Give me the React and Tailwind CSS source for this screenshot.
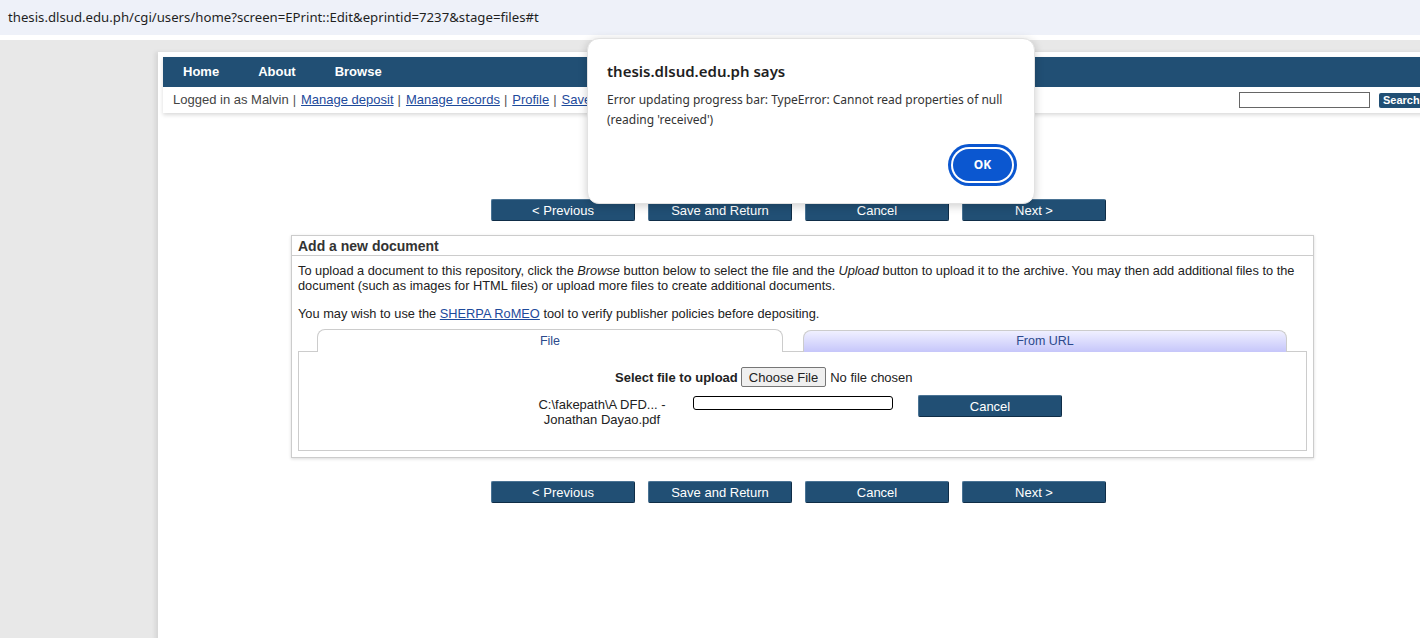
import React from 'react';

const NavButton = ({ children, className = '' }) => (
    <button
        className={`w-[144px] h-[22px] bg-[#214f74] text-white text-[13px] leading-none rounded-[2px] border border-[#0f2d47] border-t-[#4a7394] border-l-[#4a7394] ${className}`}
    >
        {children}
    </button>
);

const Sep = () => <span className="ml-[4px] mr-[5px] text-[#555]">|</span>;

const App = () => {
    return (
        <div className="relative w-[1420px] h-[638px] overflow-hidden bg-[#e8e8e8] font-['Liberation_Sans',Arial,sans-serif]">
            {/* Browser address bar */}
            <div className="h-[35px] bg-[#eef1f9] flex items-center pl-[8px] text-[13.2px] text-[#1f1f1f] font-['Noto_Sans',sans-serif]">
                thesis.dlsud.edu.ph/cgi/users/home?screen=EPrint::Edit&amp;eprintid=7237&amp;stage=files#t
            </div>
            <div className="h-[5px] bg-white"></div>

            {/* Page */}
            <div className="mt-[12px] ml-[158px] w-[1275px] h-[600px] bg-white pt-[5px] pl-[5px] shadow-[-3px_0_4px_rgba(0,0,0,0.08)]">
                {/* Header */}
                <div className="shadow-[0_2px_4px_rgba(0,0,0,0.15)]">
                    <div className="h-[30px] bg-[#214f74] flex items-center pl-[20px] gap-[39px] text-white font-bold text-[13px]">
                        <span>Home</span>
                        <span>About</span>
                        <span>Browse</span>
                    </div>
                    <div className="h-[26px] bg-white flex items-center justify-between pl-[10px] text-[13px] text-[#444]">
                        <div className="flex items-center">
                            <span>Logged in as Malvin</span>
                            <Sep />
                            <a className="text-[#1d4a9b] underline">Manage deposit</a>
                            <Sep />
                            <a className="text-[#1d4a9b] underline">Manage records</a>
                            <Sep />
                            <a className="text-[#1d4a9b] underline">Profile</a>
                            <Sep />
                            <a className="text-[#1d4a9b] underline">Saved searches</a>
                            <Sep />
                            <a className="text-[#1d4a9b] underline">Review</a>
                            <Sep />
                            <a className="text-[#1d4a9b] underline">Logout</a>
                        </div>
                        <div className="flex items-center gap-[9px] pr-[4px]">
                            <div className="w-[131px] h-[16px] border border-[#666] bg-white"></div>
                            <button className="h-[15px] px-[4px] w-[50px] bg-[#214f74] text-white font-bold text-[11px] leading-none rounded-[2px] text-left">
                                Search
                            </button>
                        </div>
                    </div>
                </div>

                {/* Content */}
                <div className="ml-[128px] w-[1023px]">
                    <div className="mt-[86px] pl-[200px] flex gap-[13px]">
                        <NavButton>&lt; Previous</NavButton>
                        <NavButton>Save and Return</NavButton>
                        <NavButton>Cancel</NavButton>
                        <NavButton>Next &gt;</NavButton>
                    </div>

                    {/* Add a new document box */}
                    <div className="mt-[14px] h-[223px] border border-[#ccc] shadow-[0_1px_3px_rgba(0,0,0,0.15)] bg-white">
                        <div className="h-[20px] pt-[1px] border-b border-[#ccc] px-[6px] flex items-center font-bold text-[14px] text-[#333]">
                            Add a new document
                        </div>
                        <div className="px-[6px] pt-[7px] text-[12.8px] leading-[15px] text-[#222]">
                            <p>
                                To upload a document to this repository, click the <i>Browse</i> button below to select the file and the <i>Upload</i> button to upload it to the archive. You may then add additional files to the document (such as images for HTML files) or upload more files to create additional documents.
                            </p>
                            <p className="mt-[13px]">
                                You may wish to use the <a className="text-[#1d4a9b] underline">SHERPA RoMEO</a> tool to verify publisher policies before depositing.
                            </p>

                            {/* Tabs */}
                            <div className="mt-[8px] flex items-end relative z-10">
                                <div className="ml-[19px] w-[466px] h-[23px] bg-white border border-[#ccc] border-b-0 rounded-t-[8px] flex items-center justify-center text-[12.5px] text-[#2c4a8c]">
                                    File
                                </div>
                                <div className="ml-[20px] w-[484px] h-[22px] bg-gradient-to-b from-[#f0f0ff] to-[#c6c6fa] border border-[#ccc] border-b-0 rounded-t-[8px] flex items-center justify-center text-[12.5px] text-[#2c4a8c]">
                                    From URL
                                </div>
                            </div>
                            <div className="w-[1009px] h-[100px] border border-[#ccc] -mt-[1px] text-[13px] text-[#222]">
                                <div className="pt-[15px] pl-[316px] flex items-center">
                                    <span className="font-bold mr-[3px]">Select file to upload</span>
                                    <span className="h-[20px] px-[7px] bg-[#efefef] border border-[#767676] rounded-[2px] flex items-center">
                                        Choose File
                                    </span>
                                    <span className="ml-[4px]">No file chosen</span>
                                </div>
                                <div className="mt-[8px] pl-[229px] flex items-start">
                                    <div className="w-[148px] pt-[2px] leading-[15px] text-center">
                                        <div>C:\fakepath\A DFD... -</div>
                                        <div>Jonathan Dayao.pdf</div>
                                    </div>
                                    <div className="ml-[17px] mt-[1px] w-[200px] h-[14px] border border-black rounded-[3px]"></div>
                                    <NavButton className="ml-[25px]">Cancel</NavButton>
                                </div>
                            </div>
                        </div>
                    </div>

                    <div className="mt-[23px] pl-[200px] flex gap-[13px]">
                        <NavButton>&lt; Previous</NavButton>
                        <NavButton>Save and Return</NavButton>
                        <NavButton>Cancel</NavButton>
                        <NavButton>Next &gt;</NavButton>
                    </div>
                </div>
            </div>

            {/* Alert dialog */}
            <div className="absolute left-[587px] top-[38px] w-[448px] h-[166px] bg-white rounded-[12px] border border-[#e2e2e2] shadow-[0_2px_10px_rgba(0,0,0,0.2)] font-['Noto_Sans',sans-serif] text-[#1f1f1f]">
                <div className="pl-[19px] pt-[21px] text-[15px] font-semibold leading-[22px]">
                    thesis.dlsud.edu.ph says
                </div>
                <div className="pl-[19px] pr-[20px] mt-[8px] text-[12px] leading-[20px] text-[#333]">
                    Error updating progress bar: TypeError: Cannot read properties of null (reading 'received')
                </div>
                <div className="absolute right-[22px] bottom-[22px]">
                    <button className="w-[59px] h-[32px] rounded-full bg-[#0b57d0] text-white font-bold text-[12px] ring-[3px] ring-[#0b57d0] ring-offset-2 ring-offset-white">
                        OK
                    </button>
                </div>
            </div>
        </div>
    );
};

export default App;
